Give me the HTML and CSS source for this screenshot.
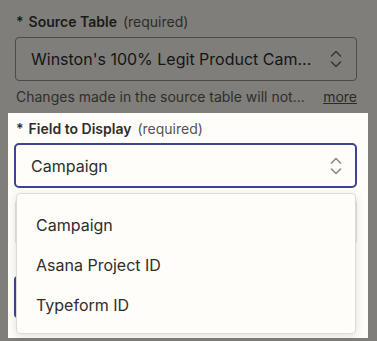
FILE: index.html
```html
<!DOCTYPE html>
<html lang="en">
<head>
<meta charset="utf-8">
<title>Field to Display</title>
<link rel="stylesheet" href="styles.css">
</head>
<body>
<div class="page">
  <section class="dim">
    <div class="label"><span class="star">*</span><b>Source Table</b><span class="req">(required)</span></div>
    <div class="select select-dim">
      <span class="value">Winston's 100% Legit Product Cam...</span>
      <svg class="chev" width="14" height="20" viewBox="0 0 14 20"><path d="M2.5 7 L7 2.5 L11.5 7 M2.5 13 L7 17.5 L11.5 13" fill="none" stroke="#3a3a38" stroke-width="1.6" stroke-linecap="round" stroke-linejoin="round"/></svg>
    </div>
    <div class="help"><span>Changes made in the source table will not...</span><a class="more">more</a></div>
  </section>
  <section class="panel">
    <div class="label"><span class="star">*</span><b>Field to Display</b><span class="req">(required)</span></div>
    <div class="field">
      <div class="select select-focus">
        <span class="value">Campaign</span>
        <svg class="chev" width="14" height="20" viewBox="0 0 14 20"><path d="M2.5 7 L7 2.5 L11.5 7 M2.5 13 L7 17.5 L11.5 13" fill="none" stroke="#8a8a88" stroke-width="1.6" stroke-linecap="round" stroke-linejoin="round"/></svg>
      </div>
      <div class="under under-gray"></div>
      <div class="under under-blue"></div>
      <ul class="menu">
        <li>Campaign</li>
        <li>Asana Project ID</li>
        <li>Typeform ID</li>
      </ul>
    </div>
  </section>
</div>
</body>
</html>
```

FILE: styles.css
```css
* { box-sizing: border-box; }
html, body { margin: 0; padding: 0; }
body {
  background: #7f7e7b;
  font-family: Inter, "Noto Sans", sans-serif;
  width: 377px;
  height: 341px;
  overflow: hidden;
}
.page { height: 341px; display: flex; flex-direction: column; }
.dim { padding: 12px 20px 0 15px; color: #1a1a19; }
.label {
  font-size: 14px;
  line-height: 20px;
  padding-left: 1px;
  display: flex;
  align-items: baseline;
}
.label .star { margin-right: 5px; font-weight: 600; }
.label b { font-weight: 600; margin-right: 6px; }
.dim .label .req { color: #2c2c2a; }
.select {
  display: flex;
  align-items: center;
  justify-content: space-between;
  border-radius: 4px;
}
.select .value { font-size: 16px; }
.select-dim {
  margin-top: 5px;
  height: 44px;
  border: 1px solid #4b4b49;
  padding: 0 13px 0 15px;
  color: #151514;
}
.help {
  margin-top: 6px;
  font-size: 14px;
  line-height: 20px;
  padding-left: 1px;
  display: flex;
  justify-content: space-between;
  color: #2e2e2c;
}
.help .more { text-decoration: underline; color: #2b2b29; }
.panel {
  margin: 6px 9px 3px 8px;
  flex: 1;
  background: #fffdf9;
  padding: 6px 11px 0 6px;
  color: #2d2e2e;
}
.panel .label { padding-left: 2px; }
.panel .label .req { color: #545452; }
.field { position: relative; margin-top: 4px; }
.select-focus {
  height: 45px;
  border: 2px solid #3d4592;
  border-radius: 5px;
  padding: 0 12px 0 15px;
  background: #fffdf9;
  color: #2d2e2e;
}
.under { border-radius: 4px; }
.under-gray {
  margin: 11px 0 0 1px;
  height: 46px;
  border: 1px solid #e2e1de;
}
.under-blue {
  margin: 31px 20px 0 0;
  height: 42px;
  border: 2px solid #3d4592;
}
.menu {
  position: absolute;
  top: 50px;
  left: 2px;
  width: 340px;
  height: 141px;
  margin: 0;
  padding: 11px 0 10px;
  list-style: none;
  background: #fffdf9;
  border: 1px solid #dddcd9;
  border-radius: 4px;
  box-shadow: 0 2px 8px rgba(0,0,0,0.12);
}
.menu li {
  height: 40px;
  line-height: 40px;
  padding-left: 19px;
  font-size: 16px;
  color: #2d2e2e;
}
```
